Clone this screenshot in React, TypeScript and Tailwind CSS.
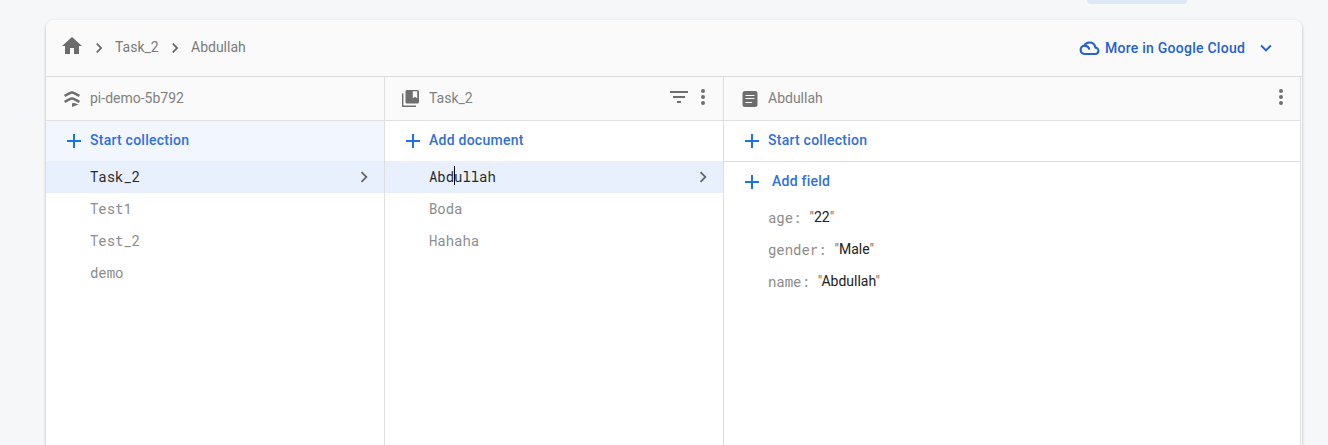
import type { ReactNode } from "react";

type IconProps = { d: string; className?: string };

function Icon({ d, className = "size-6" }: IconProps) {
  return (
    <svg viewBox="0 0 24 24" fill="currentColor" fillRule="evenodd" className={`shrink-0 ${className}`} aria-hidden="true">
      <path d={d} />
    </svg>
  );
}

const icons = {
  home: "M10 20v-6h4v6h5v-8h3L12 3 2 12h3v8z",
  chevron: "M10 6 8.59 7.41 13.17 12l-4.58 4.59L10 18l6-6z",
  expand: "M16.59 8.59 12 13.17 7.41 8.59 6 10l6 6 6-6z",
  add: "M19 13h-6v6h-2v-6H5v-2h6V5h2v6h6z",
  filter: "M10 18h4v-2h-4v2zM3 6v2h18V6H3zm3 7h12v-2H6v2z",
  more: "M12 8a2 2 0 1 0 0-4 2 2 0 0 0 0 4zm0 2a2 2 0 1 0 0 4 2 2 0 0 0 0-4zm0 6a2 2 0 1 0 0 4 2 2 0 0 0 0-4z",
};

function DatabaseIcon() {
  return (
    <svg viewBox="0 0 16 16" fill="none" className="ml-px size-4 shrink-0" aria-hidden="true">
      <path d="M.6 4.900 5.800 2.100Q8 1 10.200 2.100L15.400 4.900" stroke="currentColor" strokeWidth="2.400" />
      <path d="M.6 10.900 5.800 8.100Q8 7 10.200 8.100L15.400 10.900" stroke="currentColor" strokeWidth="2.400" />
      <path d="M8 12.200 10.500 12l4 1.400L8 16z" fill="currentColor" />
    </svg>
  );
}

function CollectionIcon() {
  return (
    <svg viewBox="0 0 17 17" fill="none" className="size-[17px] shrink-0" aria-hidden="true">
      <path d="M.700 3.500v12.800H14" stroke="currentColor" strokeWidth="1.400" />
      <rect x="3.500" y="0" width="13.500" height="13.500" rx="1.500" fill="currentColor" />
      <path d="M10.800 1.300h4.400v7L13 6.700l-2.200 1.600z" fill="#fafafa" />
    </svg>
  );
}

function DocumentIcon() {
  return (
    <svg viewBox="0 0 16 16" fill="none" className="ml-px size-4 shrink-0" aria-hidden="true">
      <rect x=".5" y="0" width="15" height="16" rx="2.500" fill="currentColor" />
      <path d="M3.500 4.500h9M3.500 7.500h9M3.500 11.500h6.500" stroke="#fafafa" strokeWidth="1.100" />
    </svg>
  );
}

function CloudIcon() {
  return (
    <svg viewBox="0 0 21 15" fill="none" stroke="currentColor" strokeWidth="2.100" className="h-[15px] w-[21px] shrink-0" aria-hidden="true">
      <path d="M5.200 13h11a3.200 3.200 0 0 0 .2-6.400C15.800 3.500 13.300 1.500 10.400 1.500 8 1.500 6.300 2.800 5.200 4.700A4.200 4.200 0 0 0 5.200 13z" />
      <path d="M5.300 4.900c2.700-.2 4.500 1.100 5 3.700" />
    </svg>
  );
}

function PanelHeader({ icon, title, children }: { icon: ReactNode; title: string; children?: ReactNode }) {
  return (
    <div className="flex h-11 items-center border-b border-[#e0e0e3] bg-[#fafafa] pb-px text-[#6e6e6e]">
      <span className="flex w-11 shrink-0 items-center pl-[17px] pt-px">{icon}</span>
      <span className="grow text-[#818181]">{title}</span>
      {children}
    </div>
  );
}

function AddButton({ label, className = "h-10", gap = "gap-1" }: { label: string; className?: string; gap?: string }) {
  return (
    <button className={`flex w-full items-center pl-4 font-medium tracking-[0.25px] text-[#1a73e8] ${gap} ${className}`}>
      <Icon d={icons.add} />
      <span className="-mt-0.5 text-[#3170dc]">{label}</span>
    </button>
  );
}

function Row({ children, selected = false }: { children: ReactNode; selected?: boolean }) {
  return (
    <div
      className={`flex h-8 items-center pl-11 pr-[9px] font-['Roboto_Mono','Liberation_Mono',monospace] ${
        selected ? "bg-[#e8f0fe] text-[#2b2b2b]" : "text-[#8c8c8c]"
      }`}
    >
      <span className="grow tracking-[-0.05px]">{children}</span>
      {selected && <Icon d={icons.chevron} className="size-[22px] text-[#66666a]" />}
    </div>
  );
}

const fields = [
  ["age", "22"],
  ["gender", "Male"],
  ["name", "Abdullah"],
];

export default function App() {
  return (
    <div className="h-[445px] overflow-hidden bg-[#f6f7f9] font-[Roboto,sans-serif] text-[14px] leading-5">
      <div className="ml-[1087px] h-1 w-[100px] rounded-b-lg bg-[#dce7f8]" />
      <main className="ml-[46px] mt-4 flex h-[440px] w-[1256px] flex-col overflow-hidden rounded-t-lg bg-white shadow-[0_1px_3px_rgba(0,0,0,0.3)]">
        <header className="flex h-[57px] shrink-0 items-center border-b border-[#dcdcdc] bg-[#fafafa] pl-[14px] pr-[25px] text-[#7b7b7b]">
          <Icon d={icons.home} className="-mt-1 size-6 text-[#6b6b6b]" />
          <Icon d={icons.chevron} className="ml-[5px] size-5 text-[#666]" />
          <span className="-mt-0.5 ml-[6px] w-11">Task_2</span>
          <Icon d={icons.chevron} className="ml-[6px] size-5 text-[#666]" />
          <span className="-mt-0.5 ml-[6px] grow">Abdullah</span>
          <div className="flex items-center font-medium tracking-[0.25px] text-[#2462d1]">
            <CloudIcon />
            <span className="ml-[5px] w-[150px] whitespace-nowrap">More in Google Cloud</span>
            <Icon d={icons.expand} className="size-[22px]" />
          </div>
        </header>

        <div className="grid grow grid-cols-[339px_339px_577px_1px]">
          <section className="border-r border-[#dedede]">
            <PanelHeader icon={<DatabaseIcon />} title="pi-demo-5b792" />
            <AddButton label="Start collection" className="h-10 bg-[#f2f7ff]" />
            <Row selected>Task_2</Row>
            <Row>Test1</Row>
            <Row>Test_2</Row>
            <Row>demo</Row>
          </section>

          <section className="border-r border-[#dedede]">
            <PanelHeader icon={<CollectionIcon />} title="Task_2">
              <div className="-mt-0.5 flex pr-2">
                <Icon d={icons.filter} />
                <Icon d={icons.more} />
              </div>
            </PanelHeader>
            <AddButton label="Add document" />
            <Row selected>
              Abd
              <span className="relative">
                <span className="absolute -top-px left-0 h-[19px] w-px bg-black" />
                ullah
              </span>
            </Row>
            <Row>Boda</Row>
            <Row>Hahaha</Row>
          </section>

          <section className="border-r border-[#dedede]">
            <PanelHeader icon={<DocumentIcon />} title="Abdullah">
              <Icon d={icons.more} className="-mt-0.5 mr-[7px] size-6" />
            </PanelHeader>
            <AddButton label="Start collection" className="h-[41px] border-b border-[#dedede]" />
            <AddButton label="Add field" className="h-[39px]" gap="gap-2" />
            {fields.map(([key, value]) => (
              <div key={key} className="flex h-8 items-center pl-11">
                <span className="mr-2 mt-0.5 whitespace-pre font-['Roboto_Mono','Liberation_Mono',monospace] tracking-[-0.05px] text-[#8c8c8c]">{key}:</span>
                <span className="text-[#212121]">
                  <span className="text-[#8a6a55]">"</span>
                  {value}
                  <span className="text-[#8a6a55]">"</span>
                </span>
              </div>
            ))}
          </section>
        </div>
      </main>
    </div>
  );
}
